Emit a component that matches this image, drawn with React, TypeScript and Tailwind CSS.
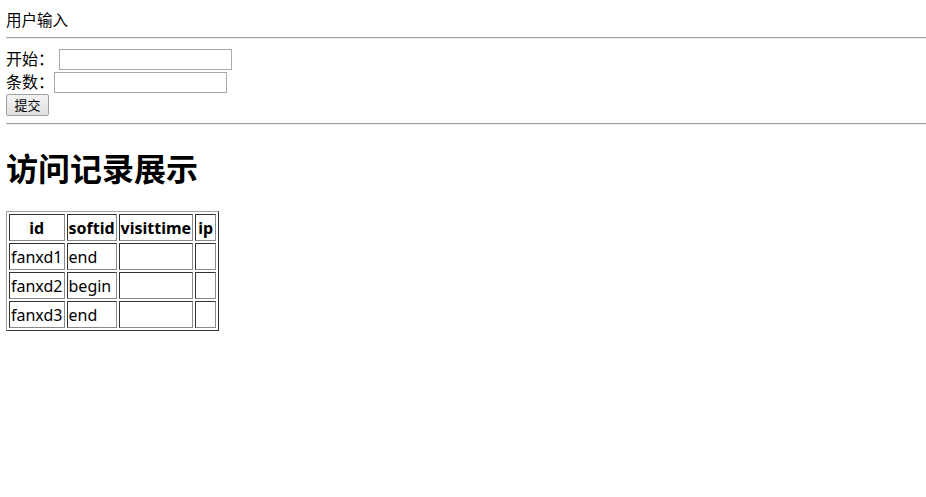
const rows = [
  { id: 'fanxd1', softid: 'end' },
  { id: 'fanxd2', softid: 'begin' },
  { id: 'fanxd3', softid: 'end' },
];

const cell = 'border border-t-[#333] border-l-[#333] border-r-[#8a8a8a] border-b-[#8a8a8a] p-px h-[27px]';

export default function App() {
  return (
    <div className="min-h-[497px] bg-white pl-[6px] text-black font-['Noto_Sans','Noto_Sans_CJK_SC',sans-serif] text-[16px]">
      {/* 用户输入 */}
      <div className="pt-[10px] text-[15.5px] leading-[20px]">用户输入</div>
      <hr className="mt-[7px] border-0 border-t border-t-[#a0a0a0] border-b border-b-[#eeeeee]" />

      <form className="mt-[10px] flex flex-col">
        <div className="flex items-center h-[21px] leading-[21px]">
          <span>开始：</span>
          <input type="text" className="ml-[5px] w-[173px] h-[21px] border border-[#a9a9a9] outline-none" />
        </div>
        <div className="flex items-center h-[21px] mt-[2px] leading-[21px]">
          <span>条数：</span>
          <input type="text" className="w-[173px] h-[21px] border border-[#a9a9a9] outline-none" />
        </div>
        <div className="mt-px flex">
          <button
            type="button"
            className="h-[22px] w-[43px] rounded-[2px] border border-[#a0a0a0] bg-gradient-to-b from-[#f4f4f4] to-[#e0e0e0] text-[13px] leading-[20px]"
          >
            提交
          </button>
        </div>
      </form>

      <hr className="mt-[7px] border-0 border-t border-t-[#a0a0a0] border-b border-b-[#eeeeee]" />

      <h1 className="mt-[24px] text-[32px] font-bold leading-[40px]">访问记录展示</h1>

      <table className="mt-[22px] border-separate border-spacing-[2px] border border-t-[#a0a0a0] border-l-[#a0a0a0] border-r-[#333] border-b-[#333] leading-[22px]">
        <thead>
          <tr>
            <th className={cell + ' text-center font-bold'}>id</th>
            <th className={cell + ' text-center font-bold'}>softid</th>
            <th className={cell + ' text-center font-bold'}>visittime</th>
            <th className={cell + ' text-center font-bold px-[2px]'}>ip</th>
          </tr>
        </thead>
        <tbody>
          {rows.map((r) => (
            <tr key={r.id}>
              <td className={cell}>{r.id}</td>
              <td className={cell}>{r.softid}</td>
              <td className={cell}></td>
              <td className={cell}></td>
            </tr>
          ))}
        </tbody>
      </table>
    </div>
  );
}
